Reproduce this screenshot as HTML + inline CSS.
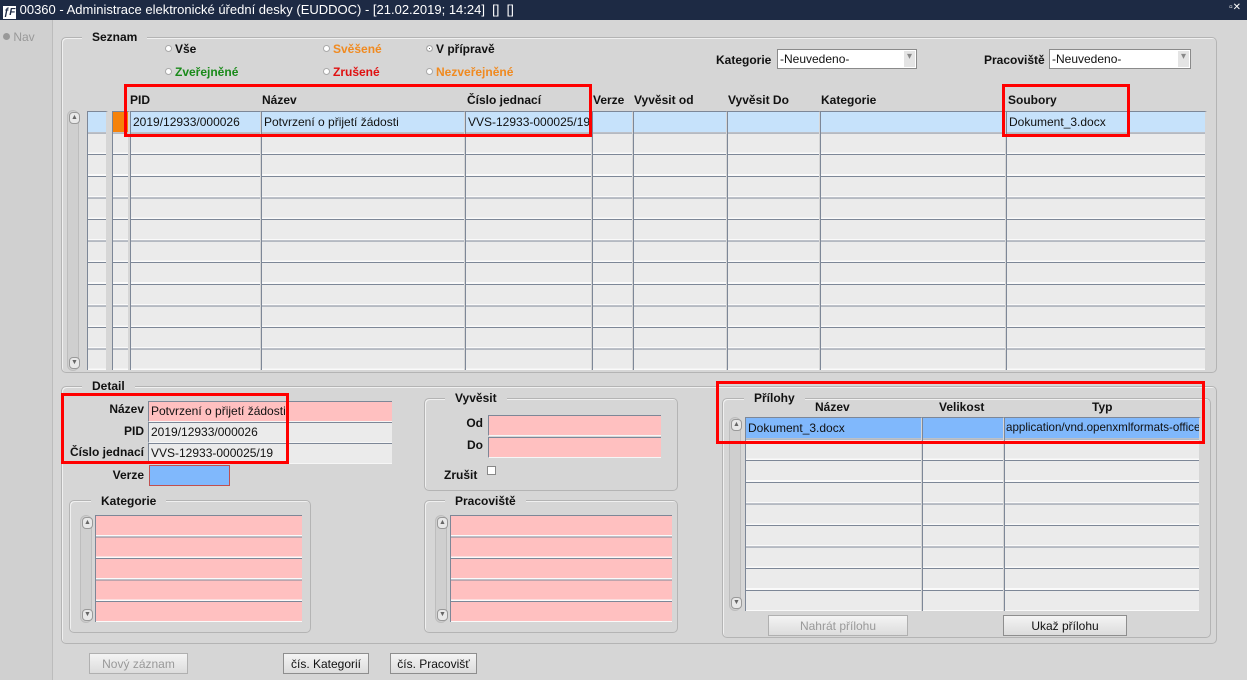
<!DOCTYPE html>
<html><head><meta charset="utf-8"><style>
*{margin:0;padding:0;box-sizing:border-box}
body{width:1247px;height:680px;overflow:hidden;background:#d6d6d6;font-family:"Liberation Sans",Arial,sans-serif;font-size:12px;color:#111;position:relative}
.a{position:absolute}
.frame{position:absolute;border:1px solid #b4b4b4;border-radius:5px;box-shadow:1px 1px 0 #f0f0f0 inset}
.leg{position:absolute;background:#d6d6d6;padding:0 10px;font-weight:bold;font-size:12px}
.col{position:absolute;border-left:1px solid #7d8797;border-right:2px solid #d6d6d6;background:repeating-linear-gradient(to bottom,#7d8797 0 1px,#ebebeb 1px 20px,#fafafa 20px 21.6px)}
.colp{position:absolute;border-left:1px solid #7d8797;background:repeating-linear-gradient(to bottom,#7d8797 0 1px,#ffc0c0 1px 20px,#fafafa 20px 21.5px)}
.cell{position:absolute;border-top:1px solid #7d8797;border-left:1px solid #7d8797;border-right:2px solid #d6d6d6;height:21px;padding:3px 2px 0;font-size:12px;white-space:nowrap;overflow:hidden}
.fld{position:absolute;border-top:1px solid #7d8797;border-left:1px solid #7d8797;border-bottom:1px solid #f6f6f6;padding:2px 2px 0;font-size:12px;white-space:nowrap;overflow:hidden}
.lbl{position:absolute;font-weight:bold;text-align:right;font-size:12px}
.sb{position:absolute;width:12px;background:#cfcfcf;border:1px solid #bdbdbd;border-radius:6px}
.sb:before{content:"▲";position:absolute;top:1px;left:1px;font-size:7px;color:#666;width:9px;height:10px;border:1px solid #999;border-radius:4px;background:#e8e8e8;text-align:center;line-height:9px}
.sb:after{content:"▼";position:absolute;bottom:1px;left:1px;font-size:7px;color:#666;width:9px;height:10px;border:1px solid #999;border-radius:4px;background:#e8e8e8;text-align:center;line-height:9px}
.rad{position:absolute;font-weight:bold;font-size:12px}
.rad i{display:inline-block;width:7px;height:7px;border-radius:50%;background:#fff;border:1px solid #aaa;margin-right:3px;vertical-align:1px}
.btn{position:absolute;border:1px solid #8e8e8e;background:linear-gradient(#f4f4f4,#dcdcdc);text-align:center;font-size:12px;padding-top:3px;height:21px}
.red{position:absolute;border:3px solid #ff0000}
.sel{position:absolute;background:#fff;border:1px solid #8a8a8a;height:20px;font-size:12px;padding:2px 2px}
.sel:after{content:"▾";position:absolute;right:1px;top:1px;width:11px;height:16px;background:#e4e4e4;color:#888;font-size:10px;text-align:center}
</style></head><body>
<div class="a" style="left:0;top:0;width:1247px;height:20px;background:#1d2a44;color:#fff;font-size:13px;padding:2px 0 0 3px">
<span style="display:inline-block;width:13px;height:13px;background:#fff;color:#1d2a44;font-size:10px;font-weight:bold;font-style:italic;line-height:13px;text-align:center;vertical-align:-1px">ƒF</span> 00360 - Administrace elektronické úřední desky (EUDDOC) - [21.02.2019; 14:24]&nbsp; []&nbsp; []
<span class="a" style="right:6px;top:2px;font-size:10px">▫✕</span></div>
<div class="a" style="left:0;top:20px;width:53px;height:660px;background:#d0d0d0;border-right:1px solid #bcbcbc"></div>
<div class="a" style="left:3px;top:30px;color:#999;font-size:12px"><span style="display:inline-block;width:7px;height:7px;border-radius:50%;background:#999;vertical-align:1px"></span> Nav</div>

<div class="frame" style="left:61px;top:37px;width:1156px;height:336px"></div>
<div class="leg" style="left:82px;top:30px">Seznam</div>
<div class="rad" style="left:165px;top:42px"><i></i>Vše</div>
<div class="rad" style="left:323px;top:42px;color:#f08a20"><i></i>Svěšené</div>
<div class="rad" style="left:426px;top:42px"><i style="background:#333;box-shadow:inset 0 0 0 2px #fff"></i>V přípravě</div>
<div class="rad" style="left:165px;top:65px;color:#1a8a1a"><i></i>Zveřejněné</div>
<div class="rad" style="left:323px;top:65px;color:#e01010"><i></i>Zrušené</div>
<div class="rad" style="left:426px;top:65px;color:#f08a20"><i></i>Nezveřejněné</div>
<div class="lbl" style="left:716px;top:53px">Kategorie</div>
<div class="sel" style="left:777px;top:49px;width:140px">-Neuvedeno-</div>
<div class="lbl" style="left:984px;top:53px">Pracoviště</div>
<div class="sel" style="left:1049px;top:49px;width:142px">-Neuvedeno-</div>

<div class="lbl" style="left:130px;top:93px">PID</div>
<div class="lbl" style="left:262px;top:93px">Název</div>
<div class="lbl" style="left:467px;top:93px">Číslo jednací</div>
<div class="lbl" style="left:593px;top:93px">Verze</div>
<div class="lbl" style="left:634px;top:93px">Vyvěsit od</div>
<div class="lbl" style="left:728px;top:93px">Vyvěsit Do</div>
<div class="lbl" style="left:821px;top:93px">Kategorie</div>
<div class="lbl" style="left:1008px;top:93px">Soubory</div>

<div class="sb" style="left:67px;top:110px;height:261px"></div>
<div class="col" style="left:87px;top:111px;width:21px;height:259px"></div>
<div class="col" style="left:112px;top:111px;width:18px;height:259px"></div>
<div class="col" style="left:130px;top:111px;width:132px;height:259px"></div>
<div class="col" style="left:261px;top:111px;width:205px;height:259px"></div>
<div class="col" style="left:465px;top:111px;width:128px;height:259px"></div>
<div class="col" style="left:592px;top:111px;width:42px;height:259px"></div>
<div class="col" style="left:633px;top:111px;width:95px;height:259px"></div>
<div class="col" style="left:727px;top:111px;width:94px;height:259px"></div>
<div class="col" style="left:820px;top:111px;width:187px;height:259px"></div>
<div class="col" style="left:1006px;top:111px;width:201px;height:259px"></div>
<div class="cell" style="left:87px;top:111px;width:21px;background:#c6e2fb"></div>
<div class="cell" style="left:112px;top:111px;width:18px;background:#f5820a"></div>
<div class="cell" style="left:130px;top:111px;width:132px;background:#c6e2fb">2019/12933/000026</div>
<div class="cell" style="left:261px;top:111px;width:205px;background:#c6e2fb">Potvrzení o přijetí žádosti</div>
<div class="cell" style="left:465px;top:111px;width:128px;background:#c6e2fb">VVS-12933-000025/19</div>
<div class="cell" style="left:592px;top:111px;width:42px;background:#c6e2fb"></div>
<div class="cell" style="left:633px;top:111px;width:95px;background:#c6e2fb"></div>
<div class="cell" style="left:727px;top:111px;width:94px;background:#c6e2fb"></div>
<div class="cell" style="left:820px;top:111px;width:187px;background:#c6e2fb"></div>
<div class="cell" style="left:1006px;top:111px;width:201px;background:#c6e2fb">Dokument_3.docx</div>

<div class="frame" style="left:61px;top:386px;width:1156px;height:258px"></div>
<div class="leg" style="left:82px;top:379px">Detail</div>
<div class="lbl" style="left:60px;top:402px;width:84px">Název</div>
<div class="fld" style="left:148px;top:401px;width:244px;height:21px;background:#ffc0c0">Potvrzení o přijetí žádosti</div>
<div class="lbl" style="left:60px;top:424px;width:84px">PID</div>
<div class="fld" style="left:148px;top:422px;width:244px;height:21px;background:#ebebeb">2019/12933/000026</div>
<div class="lbl" style="left:60px;top:445px;width:84px">Číslo jednací</div>
<div class="fld" style="left:148px;top:443px;width:244px;height:21px;background:#ebebeb">VVS-12933-000025/19</div>
<div class="lbl" style="left:60px;top:468px;width:84px">Verze</div>
<div class="a" style="left:149px;top:465px;width:81px;height:21px;background:#80b8fc;border:1px solid #c05050"></div>

<div class="frame" style="left:424px;top:398px;width:254px;height:93px"></div>
<div class="leg" style="left:445px;top:391px">Vyvěsit</div>
<div class="lbl" style="left:440px;top:416px;width:43px">Od</div>
<div class="fld" style="left:488px;top:415px;width:173px;height:21px;background:#ffc0c0"></div>
<div class="lbl" style="left:440px;top:438px;width:43px">Do</div>
<div class="fld" style="left:488px;top:437px;width:173px;height:21px;background:#ffc0c0"></div>
<div class="lbl" style="left:444px;top:468px">Zrušit</div>
<div class="a" style="left:487px;top:466px;width:9px;height:9px;background:#fff;border:1px solid #888"></div>

<div class="frame" style="left:69px;top:500px;width:242px;height:133px"></div>
<div class="leg" style="left:91px;top:494px">Kategorie</div>
<div class="sb" style="left:80px;top:515px;height:108px"></div>
<div class="colp" style="left:95px;top:515px;width:207px;height:107px"></div>

<div class="frame" style="left:424px;top:500px;width:254px;height:133px"></div>
<div class="leg" style="left:445px;top:494px">Pracoviště</div>
<div class="sb" style="left:435px;top:515px;height:108px"></div>
<div class="colp" style="left:450px;top:515px;width:222px;height:107px"></div>

<div class="frame" style="left:722px;top:398px;width:489px;height:240px"></div>
<div class="leg" style="left:744px;top:391px">Přílohy</div>
<div class="lbl" style="left:815px;top:400px">Název</div>
<div class="lbl" style="left:939px;top:400px">Velikost</div>
<div class="lbl" style="left:1092px;top:400px">Typ</div>
<div class="sb" style="left:729px;top:417px;height:194px"></div>
<div class="col" style="left:745px;top:417px;width:178px;height:194px"></div>
<div class="col" style="left:922px;top:417px;width:83px;height:194px"></div>
<div class="col" style="left:1004px;top:417px;width:197px;height:194px"></div>
<div class="cell" style="left:745px;top:417px;width:178px;background:#80b8fc">Dokument_3.docx</div>
<div class="cell" style="left:922px;top:417px;width:83px;background:#80b8fc"></div>
<div class="cell" style="left:1004px;top:417px;width:197px;background:#80b8fc;padding-left:1px;font-size:11.6px">application/vnd.openxmlformats-office</div>
<div class="btn" style="left:768px;top:615px;width:140px;color:#999;border-color:#b0b0b0">Nahrát přílohu</div>
<div class="btn" style="left:1003px;top:615px;width:124px">Ukaž přílohu</div>

<div class="btn" style="left:89px;top:653px;width:99px;color:#999;border-color:#b0b0b0">Nový záznam</div>
<div class="btn" style="left:283px;top:653px;width:86px">čís. Kategorií</div>
<div class="btn" style="left:390px;top:653px;width:87px">čís. Pracovišť</div>

<div class="red" style="left:124px;top:84px;width:468px;height:53px"></div>
<div class="red" style="left:1002px;top:84px;width:128px;height:53px"></div>
<div class="red" style="left:61px;top:393px;width:228px;height:71px"></div>
<div class="red" style="left:716px;top:381px;width:489px;height:63px"></div>
</body></html>
